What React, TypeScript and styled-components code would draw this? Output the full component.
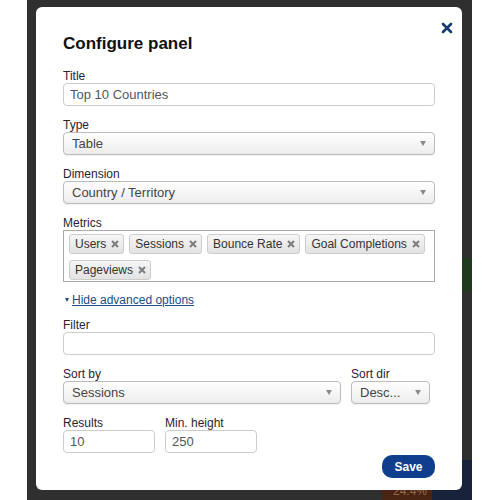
import React from "react";
import styled, { createGlobalStyle } from "styled-components";

const GlobalStyle = createGlobalStyle`
    html, body {
        margin: 0;
        padding: 0;
        background: #fff;
        font-family: "Liberation Sans", Arial, sans-serif;
    }
`;

const Page = styled.div`
    display: flex;
    width: 500px;
    height: 500px;
    overflow: hidden;
`;

const SideGap = styled.div<{ w: number }>`
    width: ${(p) => p.w}px;
    flex-shrink: 0;
    background: #fff;
`;

const Overlay = styled.div`
    position: relative;
    flex: 1;
    background: #2f2f2f;
    padding: 7px 0 0 9px;
    overflow: hidden;
`;

const Backdrop = styled.div<{ x: number; y: number; w: number; h: number; c: string }>`
    position: absolute;
    left: ${(p) => p.x}px;
    top: ${(p) => p.y}px;
    width: ${(p) => p.w}px;
    height: ${(p) => p.h}px;
    background: ${(p) => p.c};
    border-radius: 4px;
`;

const Percent = styled.div`
    position: absolute;
    left: 366px;
    top: 485px;
    font-size: 12px;
    line-height: 13px;
    color: #9a6a4a;
`;

const Modal = styled.div`
    position: relative;
    width: 372px;
    height: 443px;
    background: #fff;
    border-radius: 6px;
    padding: 27px 27px 13px 27px;
    box-sizing: content-box;
    z-index: 1;
`;

const Close = styled.button`
    position: absolute;
    top: 15px;
    right: 9px;
    width: 12px;
    height: 12px;
    padding: 0;
    border: none;
    background: none;
    cursor: pointer;
`;

const Heading = styled.h2`
    margin: 0 0 15px;
    font-size: 17px;
    line-height: 20px;
    font-weight: bold;
    color: #111;
`;

const Field = styled.div<{ mb?: number; grow?: boolean }>`
    display: flex;
    flex-direction: column;
    flex: ${(p) => (p.grow ? 1 : "none")};
    margin-bottom: ${(p) => (p.mb ?? 12)}px;
`;

const Label = styled.label`
    font-size: 12px;
    line-height: 14px;
    color: #2a2233;
`;

const Input = styled.input<{ w?: number }>`
    box-sizing: border-box;
    width: ${(p) => (p.w ? `${p.w}px` : "100%")};
    height: 23px;
    border: 1px solid #ccc;
    border-radius: 4px;
    padding: 0 6px;
    font-family: inherit;
    font-size: 13px;
    color: #555;
    background: #fff;
    outline: none;
`;

const Select = styled.div<{ w?: number }>`
    box-sizing: border-box;
    display: flex;
    align-items: center;
    justify-content: space-between;
    width: ${(p) => (p.w ? `${p.w}px` : "100%")};
    height: 23px;
    border: 1px solid #bbb;
    border-radius: 4px;
    padding: 0 8px 0 8px;
    font-size: 13px;
    color: #444;
    background: linear-gradient(#ffffff, #ececec);
    box-shadow: 0 1px 1px rgba(0, 0, 0, 0.06);
`;

const Arrow = styled.span`
    width: 0;
    height: 0;
    border-left: 3.5px solid transparent;
    border-right: 3.5px solid transparent;
    border-top: 5px solid #8a8a8a;
`;

const TagBox = styled.div`
    box-sizing: border-box;
    display: flex;
    flex-wrap: wrap;
    gap: 6px 5px;
    height: 52px;
    padding: 3px 5px;
    border: 1px solid #aaa;
    align-content: flex-start;
`;

const Tag = styled.span`
    display: inline-flex;
    align-items: center;
    gap: 5px;
    height: 18px;
    padding: 0 4px 0 5px;
    border: 1px solid #ccc;
    border-radius: 3px;
    background: linear-gradient(#f6f6f6, #e2e2e2);
    font-size: 12px;
    color: #333;
`;

const Toggle = styled.a`
    display: flex;
    align-items: center;
    gap: 3px;
    width: fit-content;
    margin: 0 0 11px 2px;
    font-size: 12px;
    line-height: 14px;
    color: #214a85;
    text-decoration: underline;
    cursor: pointer;
`;

const Caret = styled.span`
    width: 0;
    height: 0;
    border-left: 2.5px solid transparent;
    border-right: 2.5px solid transparent;
    border-top: 4px solid #214a85;
`;

const Row = styled.div<{ gap: number; pr?: number }>`
    display: flex;
    gap: ${(p) => p.gap}px;
    padding-right: ${(p) => p.pr ?? 0}px;
    margin-bottom: 12px;
`;

const Footer = styled.div`
    display: flex;
    justify-content: flex-end;
    margin-top: -10px;
`;

const SaveButton = styled.button`
    width: 53px;
    height: 23px;
    border: none;
    border-radius: 10px;
    background: #0e3e8c;
    color: #fff;
    font-family: inherit;
    font-size: 12px;
    font-weight: bold;
    cursor: pointer;
`;

const metrics = ["Users", "Sessions", "Bounce Rate", "Goal Completions", "Pageviews"];

const App = () => {
    return (
        <>
            <GlobalStyle />
            <Page>
                <SideGap w={27} />
                <Overlay>
                    <Backdrop x={435} y={258} w={14} h={34} c="#1f3a1c" />
                    <Backdrop x={400} y={460} w={50} h={40} c="#18223a" />
                    <Backdrop x={355} y={484} w={50} h={20} c="#4a2412" />
                    <Percent>24.4%</Percent>
                    <Modal>
                        <Close aria-label="close">
                            <svg width="12" height="12" viewBox="0 0 12 12">
                                <path d="M2 2 L10 10 M10 2 L2 10" stroke="#143a6e" strokeWidth="2.6" strokeLinecap="round" />
                            </svg>
                        </Close>
                        <Heading>Configure panel</Heading>

                        <Field>
                            <Label>Title</Label>
                            <Input defaultValue="Top 10 Countries" />
                        </Field>

                        <Field>
                            <Label>Type</Label>
                            <Select>
                                Table
                                <Arrow />
                            </Select>
                        </Field>

                        <Field>
                            <Label>Dimension</Label>
                            <Select>
                                Country / Territory
                                <Arrow />
                            </Select>
                        </Field>

                        <Field mb={11}>
                            <Label>Metrics</Label>
                            <TagBox>
                                {metrics.map((m) => (
                                    <Tag key={m}>
                                        {m}
                                        <svg width="8" height="8" viewBox="0 0 8 8">
                                            <path d="M1 1 L7 7 M7 1 L1 7" stroke="#7d7d7d" strokeWidth="2" />
                                        </svg>
                                    </Tag>
                                ))}
                            </TagBox>
                        </Field>

                        <Toggle>
                            <Caret />
                            Hide advanced options
                        </Toggle>

                        <Field>
                            <Label>Filter</Label>
                            <Input />
                        </Field>

                        <Row gap={10} pr={5}>
                            <Field mb={0} grow>
                                <Label>Sort by</Label>
                                <Select>
                                    Sessions
                                    <Arrow />
                                </Select>
                            </Field>
                            <Field mb={0}>
                                <Label>Sort dir</Label>
                                <Select w={79}>
                                    Desc...
                                    <Arrow />
                                </Select>
                            </Field>
                        </Row>

                        <Row gap={10}>
                            <Field mb={0}>
                                <Label>Results</Label>
                                <Input w={92} defaultValue="10" />
                            </Field>
                            <Field mb={0}>
                                <Label>Min. height</Label>
                                <Input w={92} defaultValue="250" />
                            </Field>
                        </Row>

                        <Footer>
                            <SaveButton>Save</SaveButton>
                        </Footer>
                    </Modal>
                </Overlay>
                <SideGap w={28} />
            </Page>
        </>
    );
};

export default App;
